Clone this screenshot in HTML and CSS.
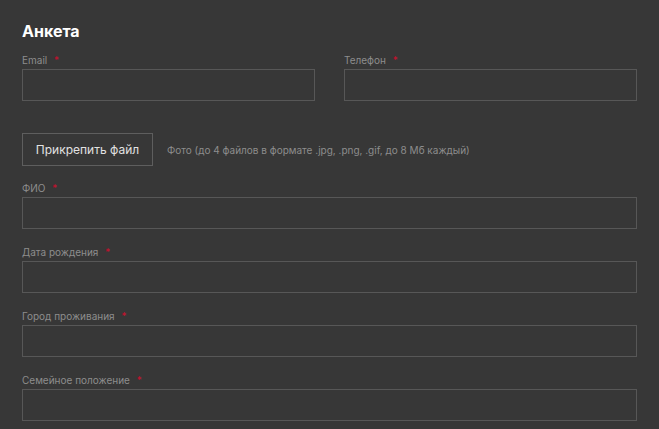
FILE: index.html
```html
<!DOCTYPE html>
<html>
    <head>
        <title>Анкета</title>
        <link rel="stylesheet" href="styles.css">
    </head>
    <body>
        <form class="anketa">
            <h1 class="zagolovok">Анкета</h1>
            <div class="ryad">
                <div class="pole">
                    <label>Email <span class="zv">*</span></label>
                    <input type="text">
                </div>
                <div class="pole">
                    <label>Телефон <span class="zv">*</span></label>
                    <input type="text">
                </div>
            </div>
            <div class="fail">
                <button type="button" class="prikrepit">Прикрепить файл</button>
                <span class="podskazka">Фото (до 4 файлов в формате .jpg, .png, .gif, до 8 Мб каждый)</span>
            </div>
            <div class="pole">
                <label>ФИО <span class="zv">*</span></label>
                <input type="text">
            </div>
            <div class="pole">
                <label>Дата рождения <span class="zv">*</span></label>
                <input type="text">
            </div>
            <div class="pole">
                <label>Город проживания <span class="zv">*</span></label>
                <input type="text">
            </div>
            <div class="pole">
                <label>Семейное положение <span class="zv">*</span></label>
                <input type="text">
            </div>
        </form>
    </body>
</html>
```

FILE: styles.css
```css
body{
    margin: 0;
    background-color: #373737;
    font-family: Inter, "Open Sans", sans-serif;
}
.anketa{
    padding: 21px 22px 0 22px;
}
.zagolovok{
    margin: 0 0 12px 0;
    font-size: 16px;
    line-height: 20px;
    font-weight: 700;
    color: #ffffff;
}
.ryad{
    display: grid;
    grid-template-columns: 1fr 1fr;
    gap: 29px;
}
.pole{
    display: flex;
    flex-direction: column;
    margin-bottom: 16px;
}
.ryad .pole{
    margin-bottom: 0;
}
.pole label{
    font-size: 10px;
    line-height: 14px;
    color: #8d8d8d;
    margin-bottom: 2px;
}
.zv{
    color: #c8102e;
    margin-left: 4px;
}
.pole input{
    box-sizing: border-box;
    height: 32px;
    background: transparent;
    border: 1px solid #575757;
    color: #ddd;
}
.fail{
    display: flex;
    align-items: center;
    margin: 32px 0 15px 0;
}
.prikrepit{
    box-sizing: border-box;
    width: 131px;
    height: 33px;
    background: transparent;
    border: 1px solid #5e5e5e;
    color: #e2e2e2;
    font-family: Inter, "Open Sans", sans-serif;
    font-size: 12px;
    padding: 0;
}
.podskazka{
    margin-left: 14px;
    font-size: 10px;
    color: #8d8d8d;
}
```
